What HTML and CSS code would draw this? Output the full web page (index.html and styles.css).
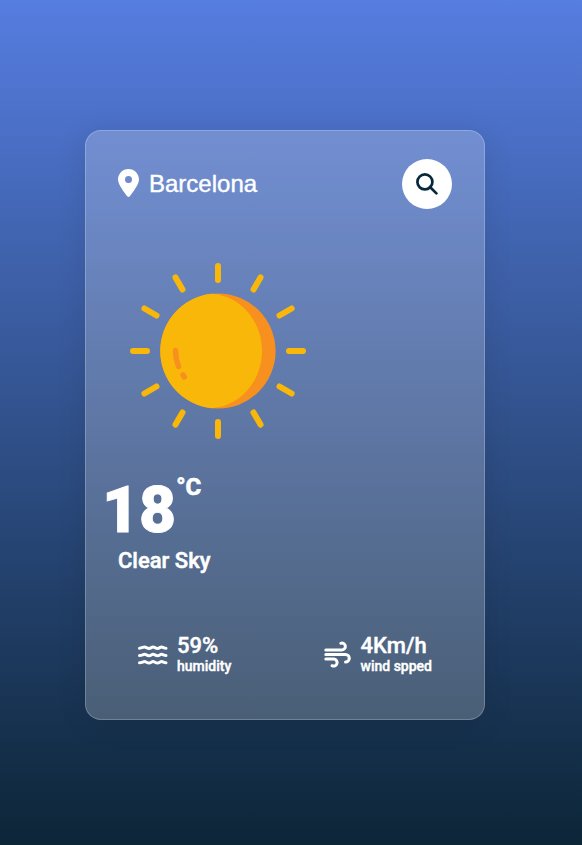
FILE: index.html
```
<!DOCTYPE html>
<html lang="en">
<head>
<meta charset="utf-8">
<title>Weather</title>
<link rel="stylesheet" href="styles.css">
</head>
<body>
<main class="card">
  <header class="search">
    <div class="place">
      <svg class="pin" viewBox="0 0 384 512" fill="#fff"><path d="M215.700 499.200C267 435 384 279.400 384 192C384 86 298 0 192 0S0 86 0 192c0 87.400 117 243 168.300 307.200c12.300 15.300 35.100 15.300 47.400 0zM192 128a64 64 0 1 1 0 128 64 64 0 1 1 0-128z"/></svg>
      <span>Barcelona</span>
    </div>
    <button class="go" aria-label="Search"><svg viewBox="0 0 22 22" fill="none" stroke="#06283d" stroke-width="2.700"><circle cx="8.900" cy="8.900" r="7.500"/><path d="M14 14l6.400 6.400" stroke-linecap="round"/></svg></button>
  </header>
  <svg class="sun" viewBox="0 0 176 176">
    <circle cx="88" cy="88" r="57.600" fill="#f7901e"/>
    <path d="M81 30.800C110 32 132 58 132 88S110 144 81 145.200a57.600 57.600 0 0 1 0-114.400z" fill="#f9b709"/>
    <g stroke="#f9b709" stroke-width="6" stroke-linecap="round"><path id="r" d="M88 3v14"/><use href="#r" transform="rotate(30 88 88)"/><use href="#r" transform="rotate(60 88 88)"/><use href="#r" transform="rotate(90 88 88)"/><use href="#r" transform="rotate(120 88 88)"/><use href="#r" transform="rotate(150 88 88)"/><use href="#r" transform="rotate(180 88 88)"/><use href="#r" transform="rotate(210 88 88)"/><use href="#r" transform="rotate(240 88 88)"/><use href="#r" transform="rotate(270 88 88)"/><use href="#r" transform="rotate(300 88 88)"/><use href="#r" transform="rotate(330 88 88)"/></g>
    <path d="M45.500 87.500q0 8.500 3 16M53 112l1.300 2" fill="none" stroke="#f7901e" stroke-width="5.500" stroke-linecap="round"/>
  </svg>
  <p class="temp">18<span class="unit">°C</span></p>
  <p class="sky">Clear Sky</p>
  <section class="details">
    <div class="item">
      <svg class="waves" viewBox="0 0 30 20" fill="none" stroke="#fff" stroke-width="3" stroke-linecap="round" stroke-linejoin="round"><path id="w" d="M1.500 3.200C4 3.200 5 2 6.500 2S9 3.400 11 3.400 13.500 2 15 2s2.500 1.400 4.500 1.400S22 2 23.500 2s2.500 1.200 4.500 1.200"/><use href="#w" y="7.300"/><use href="#w" y="14.600"/></svg>
      <div><b>59%</b><small>humidity</small></div>
    </div>
    <div class="item">
      <svg class="wind" viewBox="0 0 28 28" fill="none" stroke="#fff" stroke-width="3" stroke-linecap="round"><path d="M1.800 8.900H18a3.400 3.400 0 1 0-1.200-6.600M1.800 13.500H21.500a3.800 3.800 0 0 1 0 7.600M1.800 18.100h8.200a3.500 3.500 0 1 1-2 6.600"/></svg>
      <div><b>4Km/h</b><small>wind spped</small></div>
    </div>
  </section>
</main>
</body>
</html>
```
FILE: styles.css
```
* { box-sizing: border-box; }
body {
  margin: 0;
  height: 845px;
  padding: 130px 0 0 85px;
  background: linear-gradient(#567de0, #0c2537);
  color: #fff;
  font-family: Roboto, sans-serif;
}
p { margin: 0; }
.card {
  width: 400px;
  height: 590px;
  border: 1px solid rgba(255,255,255,.22);
  border-radius: 16px;
  background: rgba(255,255,255,.22);
  box-shadow: 0 4px 30px rgba(0,0,0,.1);
}
.search {
  display: flex;
  justify-content: space-between;
  align-items: center;
  margin: 28px 32px 0;
  height: 50px;
}
.place { display: flex; align-items: center; gap: 10px; font: 24px "Liberation Sans", Arial, sans-serif; -webkit-text-stroke: .4px #fff; }
.pin { width: 21px; height: 28px; margin-bottom: 2px; }
.go { display: grid; place-items: center; width: 50px; height: 50px; padding: 0; border: 0; border-radius: 50%; background: #fff; }
.go svg { width: 22px; height: 22px; }
.sun { display: block; width: 176px; height: 176px; margin: 54px 0 0 44px; }
.temp { display: flex; margin: 34px 0 0 16px; height: 74px; font-size: 64px; line-height: 76px; font-weight: 900; letter-spacing: 0; -webkit-text-stroke: .8px #fff; }
.unit { font-size: 24px; line-height: 28px; font-weight: 700; -webkit-text-stroke: .7px #fff; }
.sky { margin: 0 0 0 32px; font-size: 22px; line-height: 28px; font-weight: 500; -webkit-text-stroke: .5px #fff; }
.details { display: flex; justify-content: space-between; margin: 58px 52px 0 52px; }
.item { display: flex; align-items: center; gap: 9px; }
.item b, .item small { display: block; font-weight: 500; -webkit-text-stroke: .4px #fff; }
.item b { font-size: 22px; line-height: 26px; }
.item small { font-size: 14px; line-height: 14px; }
.waves { width: 30px; height: 20px; margin-top: 4px; }
.wind { width: 28px; height: 28px; margin-top: 4px; }
```
